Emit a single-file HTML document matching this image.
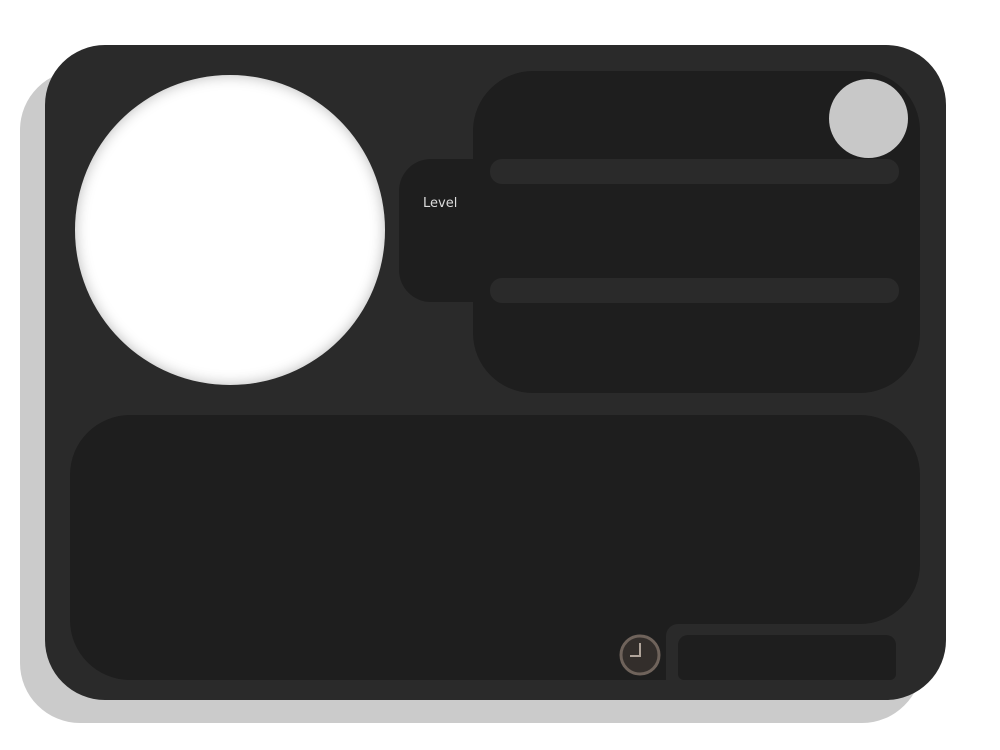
<!DOCTYPE html>
<html><head><style>
body{margin:0;width:1000px;height:750px;background:#fff;position:relative;overflow:hidden;font-family:"Liberation Sans","DejaVu Sans",sans-serif}
div{position:absolute;box-sizing:border-box}
</style></head><body>
<div style="left:20px;top:70px;width:902px;height:653px;border-radius:60px;background:#cbcbcb"></div>
<div style="left:45px;top:45px;width:901px;height:655px;border-radius:60px;background:#2a2a2a"></div>
<div style="left:75px;top:75px;width:310px;height:310px;border-radius:50%;background:#fff;box-shadow:inset 0 0 14px rgba(0,0,0,.28)"></div>
<div style="left:399px;top:159px;width:110px;height:143px;border-radius:32px;background:#1e1e1e"></div>
<div style="left:423px;top:196px;color:#ddd;font-family:'DejaVu Sans',sans-serif;font-size:13px">Level</div>
<div style="left:473px;top:71px;width:447px;height:322px;border-radius:60px;background:#1e1e1e"></div>
<div style="left:829px;top:79px;width:79px;height:79px;border-radius:50%;background:#c8c8c8"></div>
<div style="left:490px;top:159px;width:409px;height:25px;border-radius:12px;background:#2a2a2a"></div>
<div style="left:490px;top:278px;width:409px;height:25px;border-radius:12px;background:#2a2a2a"></div>
<div style="left:70px;top:415px;width:850px;height:209px;border-radius:60px;background:#1e1e1e"></div>
<div style="left:70px;top:520px;width:610px;height:160px;border-radius:0 0 0 60px;background:#1e1e1e"></div>
<div style="left:666px;top:624px;width:260px;height:60px;border-radius:12px 0 0 0;background:#2a2a2a"></div>
<div style="left:678px;top:635px;width:218px;height:45px;border-radius:10px 10px 6px 6px;background:#1e1e1e"></div>
<svg style="position:absolute;left:618px;top:633px" width="44" height="44" viewBox="0 0 44 44"><circle cx="22" cy="22" r="19" fill="#332e2b" stroke="#6f635b" stroke-width="3"/><path d="M22 10V23H12" fill="none" stroke="#b0a49a" stroke-width="2"/></svg>
</body></html>
